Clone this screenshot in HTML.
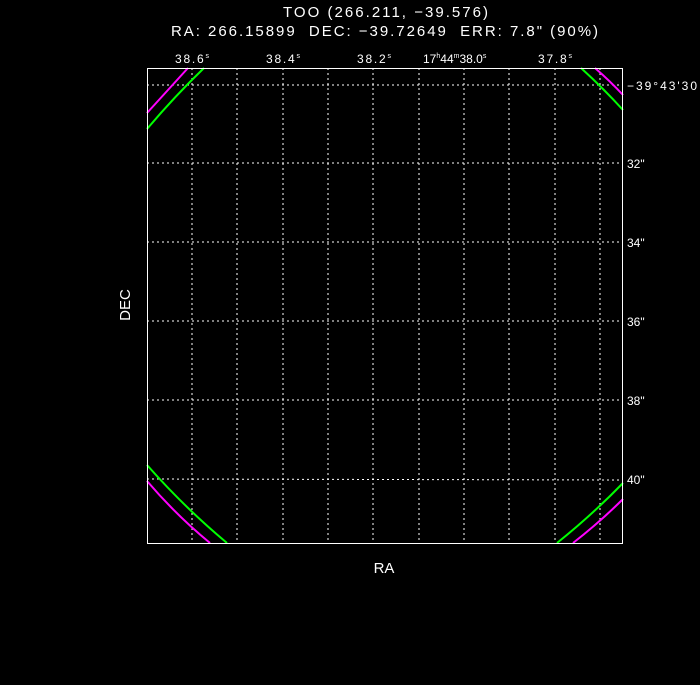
<!DOCTYPE html><html><head><style>body{margin:0;background:#000;width:700px;height:680px;overflow:hidden}</style></head><body>
<svg width="700" height="680" xmlns="http://www.w3.org/2000/svg" font-family="Liberation Sans, DejaVu Sans, sans-serif" fill="#fff">
<text x="283" y="17" font-size="15" textLength="205" lengthAdjust="spacing">TOO (266.211, −39.576)</text>
<text x="171" y="36" font-size="15" textLength="427" lengthAdjust="spacing" xml:space="preserve">RA: 266.15899  DEC: −39.72649  ERR: 7.8" (90%)</text>
<g font-size="12">
<text x="175" y="63" textLength="34" lengthAdjust="spacing">38.6<tspan font-size="7" dy="-5">s</tspan></text>
<text x="266" y="63" textLength="34" lengthAdjust="spacing">38.4<tspan font-size="7" dy="-5">s</tspan></text>
<text x="357" y="63" textLength="34" lengthAdjust="spacing">38.2<tspan font-size="7" dy="-5">s</tspan></text>
<text x="423" y="63">17<tspan font-size="7" dy="-5">h</tspan><tspan dy="5">44</tspan><tspan font-size="7" dy="-5">m</tspan><tspan dy="5">38.0</tspan><tspan font-size="7" dy="-5">s</tspan></text>
<text x="538" y="63" textLength="34" lengthAdjust="spacing">37.8<tspan font-size="7" dy="-5">s</tspan></text>
</g>
<g font-size="12">
<text x="627" y="90" textLength="70" lengthAdjust="spacing">−39°43'30</text>
<text x="627" y="168">32"</text>
<text x="627" y="247">34"</text>
<text x="627" y="326">36"</text>
<text x="627" y="405">38"</text>
<text x="627" y="484">40"</text>
</g>
<text x="384" y="573" font-size="15" text-anchor="middle">RA</text>
<text transform="translate(130,305) rotate(-90)" font-size="15" text-anchor="middle">DEC</text>
<g stroke="#fff" stroke-width="1" stroke-dasharray="2,3">
<line x1="192" y1="68" x2="192" y2="543"/><line x1="237" y1="68" x2="237" y2="543"/>
<line x1="283" y1="68" x2="283" y2="543"/><line x1="328" y1="68" x2="328" y2="543"/>
<line x1="373" y1="68" x2="373" y2="543"/><line x1="419" y1="68" x2="419" y2="543"/>
<line x1="464" y1="68" x2="464" y2="543"/><line x1="509" y1="68" x2="509" y2="543"/>
<line x1="555" y1="68" x2="555" y2="543"/><line x1="600" y1="68" x2="600" y2="543"/>
<line x1="147" y1="85" x2="623" y2="85"/><line x1="147" y1="163" x2="623" y2="163"/>
<line x1="147" y1="242" x2="623" y2="242"/><line x1="147" y1="321" x2="623" y2="321"/>
<line x1="147" y1="400" x2="623" y2="400"/><line x1="147" y1="479" x2="623" y2="480"/>
</g>
<g fill="none" stroke-width="2">
<path d="M147,113 Q168,90 188,68" stroke="#f0f"/>
<path d="M147,129 Q174,97 204,68" stroke="#0f0"/>
<path d="M581,68 Q603,88 623,110" stroke="#0f0"/>
<path d="M595,68 Q610,81 623,95" stroke="#f0f"/>
<path d="M147,465 Q185,508 227,543" stroke="#0f0"/>
<path d="M147,481 Q176,515 210,543" stroke="#f0f"/>
<path d="M557,543 Q592,515 623,483" stroke="#0f0"/>
<path d="M573,543 Q600,522 623,499" stroke="#f0f"/>
</g>
<rect x="147.5" y="68.5" width="475" height="475" fill="none" stroke="#fff" stroke-width="1"/>
</svg></body></html>
